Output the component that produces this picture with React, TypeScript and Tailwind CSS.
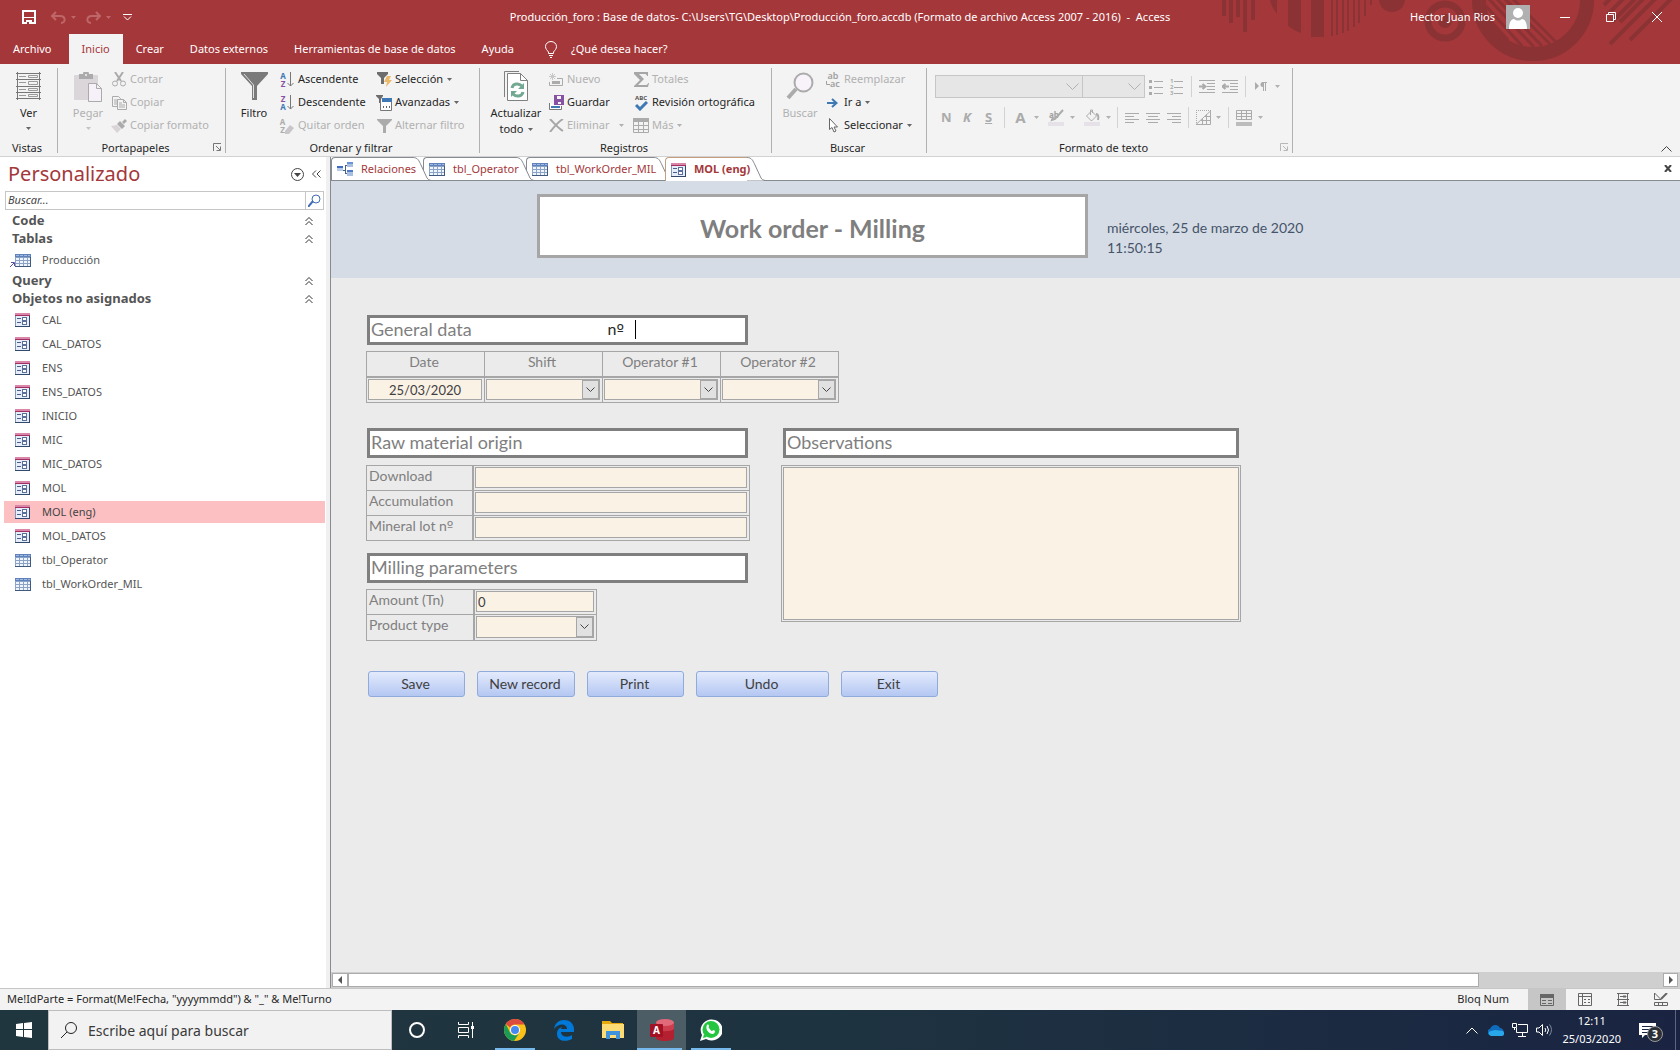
import React from 'react';

type IconProps = { className?: string };

/* ---------- small shared pieces ---------- */

const Caret = ({ className = 'text-[#666666]' }: IconProps) => (
  <svg width="5" height="3" viewBox="0 0 5 3" className={className} fill="currentColor">
    <path d="M0 0h5L2.500 3z" />
  </svg>
);

const TableIcon = () => (
  <svg width="16" height="13" viewBox="0 0 16 13" shapeRendering="crispEdges">
    <rect width="16" height="13" fill="#8ba3c7" />
    <rect width="16" height="3" fill="#5f82ba" />
    <path d="M1 4h3v2H1zM5 4h3v2H5zM9 4h3v2H9zM13 4h2v2h-2zM1 7h3v2H1zM5 7h3v2H5zM9 7h3v2H9zM13 7h2v2h-2zM1 10h3v2H1zM5 10h3v2H5zM9 10h3v2H9zM13 10h2v2h-2z" fill="#f0f5fc" />
    <path d="M15 3h1v10H0v-1h15z" fill="#40597f" />
    <path d="M1 1h3v1H1zM5 1h3v1H5zM9 1h3v1H9zM13 1h2v1h-2z" fill="#9db9e4" />
  </svg>
);

const FormIcon = () => (
  <svg width="15" height="14" viewBox="0 0 15 14" shapeRendering="crispEdges">
    <rect width="15" height="14" fill="#8296b8" />
    <rect x="1" y="3" width="13" height="10" fill="#e6eefb" />
    <rect width="15" height="2" fill="#d987a8" />
    <rect y="2" width="15" height="1" fill="#a52f60" />
    <path d="M14 3h1v11H0v-1h14z" fill="#33486c" />
    <path d="M2 5h4v1H2zM2 9h4v1H2z" fill="#4b5e86" />
    <path d="M7 4h5v4H7zM7 8h5v4H7z" fill="#5a6f99" />
    <path d="M8 5h3v2H8zM8 9h3v2H8z" fill="#fff" />
  </svg>
);

const RelationsIcon = () => (
  <svg width="16" height="14" viewBox="0 0 16 14" shapeRendering="crispEdges">
    <rect x="0" y="4" width="6" height="5" fill="#b9cdea" />
    <rect x="0" y="4" width="6" height="2" fill="#3f6bc0" />
    <rect x="10" y="0" width="6" height="5" fill="#a9bfe2" />
    <rect x="10" y="0" width="6" height="2" fill="#6b93d8" />
    <rect x="10" y="8" width="6" height="6" fill="#a9bfe2" />
    <rect x="10" y="8" width="6" height="2" fill="#4f7bcb" />
    <path d="M6 8h2V3h2M8 8v3h2" fill="none" stroke="#4a5f80" />
  </svg>
);

const DoubleUp = () => (
  <svg width="8" height="9" viewBox="0 0 8 9" fill="none" stroke="#333333">
    <path d="M.5 4L4 .5 7.500 4M.5 8L4 4.500 7.500 8" />
  </svg>
);

const Launcher = ({ className = 'text-[#777777]' }: IconProps) => (
  <svg width="9" height="9" viewBox="0 0 9 9" className={className} fill="none" stroke="currentColor">
    <path d="M.5 8V.5H8M3 3l4 4M7.500 3.500v4h-4" />
  </svg>
);

/* ---------- ribbon icons ---------- */

const ViewIcon = () => (
  <svg width="25" height="28" viewBox="0 0 25 28" fill="none" stroke="#777777">
    <path d="M1.500 0v28M23.500 0v28M0 1.500h25M0 7.500h25M0 14.500h25M0 20.500h25M0 26.500h25" />
    <path d="M3 4.500h7M3 10.500h7M3 17.500h7M3 23.500h7M12.500 3.500h9v2h-9zM12.500 9.500h9v3h-9zM12.500 16.500h9v2h-9zM12.500 22.500h9v2h-9z" stroke="#9a9a9a" />
  </svg>
);

const PasteIcon = () => (
  <svg width="28" height="30" viewBox="0 0 28 30">
    <rect x="0" y="3" width="24" height="25" rx="1" fill="#dad6da" />
    <path d="M5 2h4a3 3 0 0 1 6 0h4v5H5z" fill="#ababab" />
    <circle cx="12" cy="3" r="1" fill="#f3f3f3" />
    <path d="M14.500 11.500h8l5 5v13h-13z" fill="#f6f0f8" stroke="#ababab" />
    <path d="M22.500 11.500v5h5" fill="none" stroke="#ababab" />
  </svg>
);

const CutIcon = () => (
  <svg width="14" height="15" viewBox="0 0 14 15" fill="none" stroke="#ababab" strokeWidth="2">
    <path d="M3 0l6 9M11 0L5 9" />
    <circle cx="3" cy="11.500" r="2.500" strokeWidth="1" />
    <circle cx="11" cy="11.500" r="2.500" strokeWidth="1" />
  </svg>
);

const CopyIcon = () => (
  <svg width="15" height="14" viewBox="0 0 15 14" fill="#f3f3f3" stroke="#ababab">
    <path d="M.5.500h6l2 2v8h-8zM2 4h4M2 6h4M2 8h4" />
    <path d="M5.500 3.500h6l3 3v7h-9zM7 7h3M7 9h6M7 11h6M11.500 3.500v3h3" />
  </svg>
);

const BrushIcon = () => (
  <svg width="16" height="14" viewBox="0 0 16 14">
    <path d="M0 7l6-1 4 4-4 4z" fill="#d8d4d8" />
    <path d="M6 5l3-3 5 5-3 3zM11 3l3-3 2 2-3 3z" fill="#ababab" />
  </svg>
);

const Funnel = () => (
  <svg width="27" height="28" viewBox="0 0 27 28" fill="#7a7a7a">
    <path d="M0 0h27v2L16 14v14h-5V14L0 2z" />
    <path d="M3 2l9.500 11v13" fill="none" stroke="#e0e0e0" />
  </svg>
);

const SortIcon = ({ top, bottom, topClass, bottomClass }: { top: string; bottom: string; topClass: string; bottomClass: string }) => (
  <span className="flex items-center text-[8px] font-bold">
    <span className="flex flex-col leading-2">
      <span className={topClass}>{top}</span>
      <span className={bottomClass}>{bottom}</span>
    </span>
    <svg width="7" height="16" viewBox="0 0 7 16" className="ml-px" fill="none" stroke="#777777">
      <path d="M3.500 0v14M.5 11l3 3 3-3" />
    </svg>
  </span>
);

const ClearSortIcon = () => (
  <span className="flex items-end text-[8px] font-bold text-[#ababab]">
    <span className="flex flex-col leading-2">
      <span>A</span>
      <span>Z</span>
    </span>
    <svg width="9" height="9" viewBox="0 0 9 9" fill="#c9c5c9">
      <path d="M0 6l5-6 4 3-5 6H0z" />
    </svg>
  </span>
);

const SelectionIcon = () => (
  <svg width="15" height="15" viewBox="0 0 15 15">
    <path d="M0 0h11v2L7 6v6H4V6L0 2z" fill="#6d6d6d" />
    <path d="M10 4h4l-2 4h3l-6 7 1-5H7z" fill="#ecb968" />
  </svg>
);

const AdvancedIcon = () => (
  <svg width="16" height="16" viewBox="0 0 16 16">
    <path d="M0 0h7v1L5 4v4H3V4L0 1z" fill="#6d6d6d" />
    <path d="M4.500 5v10.500h11V5" fill="#fff" stroke="#777777" />
    <rect x="6" y="3" width="10" height="4" fill="#3e78b5" />
    <path d="M7 12h1M10 12h1M13 12h1" stroke="#666666" strokeWidth="2" />
  </svg>
);

const ToggleFilterIcon = () => (
  <svg width="15" height="14" viewBox="0 0 15 14" fill="#ababab">
    <path d="M0 0h15v1L9 7v7H6V7L0 1z" />
  </svg>
);

const RefreshIcon = () => (
  <svg width="24" height="30" viewBox="0 0 24 30" fill="none" stroke="#808080">
    <path d="M.5 26V.5H15" />
    <path d="M3.500 2.500h13l7 7v20h-20z" fill="#fff" />
    <path d="M16.500 2.500v7h7" />
    <path d="M8 17c1-5 7-5 10-2M19 21c-1 5-7 5-10 2" stroke="#73a992" strokeWidth="3" />
    <path d="M20 12v6h-6zM7 26v-6h6z" fill="#73a992" stroke="none" />
  </svg>
);

const NewIcon = () => (
  <svg width="14" height="13" viewBox="0 0 14 13" fill="none" stroke="#ababab">
    <path d="M3.500 0v7M0 3.500h7M1 1l5 5M6 1L1 6" stroke="#c8c8c8" />
    <path d="M8 5.500h5.500v7H.5V9" />
    <path d="M3 9.500h8" strokeWidth="3" />
  </svg>
);

const SaveRecordIcon = () => (
  <svg width="15" height="15" viewBox="0 0 15 15">
    <path d="M.5 8v6.500h12V11" fill="#fff" stroke="#777777" />
    <rect x="2" y="11" width="9" height="2" fill="#3e78b5" />
    <path d="M5 0h10v10H5z" fill="#8752a3" />
    <path d="M8 1h4v3H8zM9 7h3v2H9z" fill="#f3f3f3" />
  </svg>
);

const DeleteIcon = () => (
  <svg width="15" height="13" viewBox="0 0 15 13" stroke="#a6a6a6" strokeWidth="2" fill="none">
    <path d="M1 0c4 4 8 9 13 12M14 0C9 3 5 8 1 13" />
  </svg>
);

const SumIcon = () => (
  <svg width="15" height="15" viewBox="0 0 15 15" fill="#a6a6a6">
    <path d="M0 0h14v4h-1c0-1-1-2-2-2H5l5 5-6 6h8c1 0 2-1 2-2h1l-1 4H0v-1l6-6-6-6z" />
  </svg>
);

const SpellIcon = () => (
  <span className="flex flex-col items-center text-[6px] leading-[6px] font-bold text-[#555555]">
    ABC
    <svg width="13" height="10" viewBox="0 0 13 10" fill="none" stroke="#3e78b5" strokeWidth="3">
      <path d="M1 4l4 4 7-7" />
    </svg>
  </span>
);

const MoreIcon = () => (
  <svg width="16" height="15" viewBox="0 0 16 15" fill="none" stroke="#ababab">
    <rect x="0" y="0" width="16" height="4" fill="#ababab" stroke="none" />
    <path d="M.5.500h15v14H.5zM0 7.500h16M0 11.500h16M5.500 4v11M10.500 4v11" />
  </svg>
);

const FindIcon = () => (
  <svg width="28" height="28" viewBox="0 0 28 28" fill="none" stroke="#ababab">
    <path d="M2 26l8-9" strokeWidth="4" />
    <circle cx="17.500" cy="10.500" r="9" fill="#f8f2fa" strokeWidth="2" />
  </svg>
);

const ReplaceIcon = () => (
  <span className="flex flex-col text-[9px] leading-2 font-semibold text-[#a0a0a0]">
    <span>ab</span>
    <span className="flex items-center">
      <svg width="4" height="5" viewBox="0 0 4 5" fill="none" stroke="#a0a0a0">
        <path d="M.5 0v3.500H4" />
      </svg>
      ac
    </span>
  </span>
);

const GoToIcon = () => (
  <svg width="14" height="10" viewBox="0 0 14 10" fill="none" stroke="#3e78b5" strokeWidth="2">
    <path d="M1 5h10M6 1l4.500 4L6 9" />
  </svg>
);

const PointerIcon = () => (
  <svg width="9" height="15" viewBox="0 0 9 15" fill="#fff" stroke="#666666">
    <path d="M.5.500v11l2.500-2 2 4.500 2-1-2-4h3.500z" />
  </svg>
);

/* ---------- ribbon layout ---------- */

type Command = {
  label: string;
  icon: React.ReactNode;
  disabled?: boolean;
  caret?: boolean;
  farCaret?: boolean;
};

const CommandColumn = ({ items, className = '' }: { items: Command[]; className?: string }) => (
  <div className={`flex flex-col items-start ${className}`}>
    {items.map((item) => (
      <button
        key={item.label}
        type="button"
        disabled={item.disabled}
        className="flex h-[23px] items-center whitespace-nowrap text-[#262626] disabled:text-[#b1b1b1]"
      >
        <span className="mr-[3px] flex w-4 justify-center">{item.icon}</span>
        {item.label}
        {item.caret && (
          <span className={item.farCaret ? 'ml-[10px]' : 'ml-1'}>
            <Caret className={item.disabled ? 'text-[#b1b1b1]' : 'text-[#666666]'} />
          </span>
        )}
      </button>
    ))}
  </div>
);

const BigButton = ({ icon, label, disabled, caret, className }: Command & { className: string }) => (
  <button
    type="button"
    disabled={disabled}
    className={`flex shrink-0 flex-col items-center pt-1 text-[#262626] disabled:text-[#b1b1b1] ${className}`}
  >
    <span className="flex h-[33px] items-start justify-center">{icon}</span>
    <span className="leading-4 whitespace-nowrap">{label}</span>
    {caret && (
      <span className="mt-[6px]">
        <Caret className={disabled ? 'text-[#c4c4c4]' : 'text-[#666666]'} />
      </span>
    )}
  </button>
);

const Group = ({ title, className, launcher, children }: { title: string; className: string; launcher?: React.ReactNode; children: React.ReactNode }) => (
  <section className={`flex shrink-0 flex-col border-r border-[#b1b1b1] ${className}`}>
    <div className="flex h-[74px] items-start">{children}</div>
    <div className="flex h-[11px] items-center pr-[3px] text-[#262626]">
      <span className="grow text-center leading-[11px]">{title}</span>
      {launcher}
    </div>
  </section>
);

const sortColumn: Command[] = [
  { label: 'Ascendente', icon: <SortIcon top="A" bottom="Z" topClass="text-[#3e78b5]" bottomClass="text-[#8752a3]" /> },
  { label: 'Descendente', icon: <SortIcon top="Z" bottom="A" topClass="text-[#8752a3]" bottomClass="text-[#3e78b5]" /> },
  { label: 'Quitar orden', icon: <ClearSortIcon />, disabled: true },
];

const FormatButton = ({ label, children }: { label: string; children: React.ReactNode }) => (
  <button type="button" aria-label={label} disabled className="flex items-center gap-2 text-[#ababab]">
    {children}
  </button>
);

const Lines = ({ d }: { d: string }) => (
  <svg width="14" height="12" viewBox="0 0 14 12" fill="none" stroke="#ababab">
    <path d={d} />
  </svg>
);

const Divider = () => <span className="h-[21px] w-px bg-[#d2d2d2]" />;

const FontSelect = ({ label, className }: { label: string; className: string }) => (
  <div className={`relative h-[23px] ${className}`}>
    <select aria-label={label} disabled className="h-full w-full appearance-none border border-[#c6c6c6] bg-[#e6e6e6]" />
    <svg width="13" height="8" viewBox="0 0 13 8" className="absolute top-2 right-1" fill="none" stroke="#b1b1b1">
      <path d="M.5.500l6 6 6-6" />
    </svg>
  </div>
);

const Ribbon = () => (
  <div className="relative flex h-[93px] border-b border-[#d2d2d2] bg-[#f3f3f3] pt-1 pb-[3px]">
    <Group title="Vistas" className="w-[58px]">
      <BigButton icon={<ViewIcon />} label="Ver" caret className="w-full" />
    </Group>
    <Group title="Portapapeles" className="w-[168px]" launcher={<Launcher />}>
      <BigButton icon={<PasteIcon />} label="Pegar" caret disabled className="ml-3 w-9" />
      <CommandColumn
        className="ml-[5px]"
        items={[
          { label: 'Cortar', icon: <CutIcon />, disabled: true },
          { label: 'Copiar', icon: <CopyIcon />, disabled: true },
          { label: 'Copiar formato', icon: <BrushIcon />, disabled: true },
        ]}
      />
    </Group>
    <Group title="Ordenar y filtrar" className="w-[254px]">
      <BigButton icon={<Funnel />} label="Filtro" className="ml-3 w-8" />
      <CommandColumn className="ml-[9px] w-[97px]" items={sortColumn} />
      <CommandColumn
        items={[
          { label: 'Selección', icon: <SelectionIcon />, caret: true },
          { label: 'Avanzadas', icon: <AdvancedIcon />, caret: true },
          { label: 'Alternar filtro', icon: <ToggleFilterIcon />, disabled: true },
        ]}
      />
    </Group>
    <Group title="Registros" className="w-[292px]">
      <button type="button" className="ml-2 flex w-14 shrink-0 flex-col items-center pt-[3px] leading-4 text-[#262626]">
        <span className="flex h-[34px] items-start"><RefreshIcon /></span>
        <span>Actualizar</span>
        <span className="flex items-center gap-1">todo <Caret /></span>
      </button>
      <CommandColumn
        className="ml-1 w-[85px]"
        items={[
          { label: 'Nuevo', icon: <NewIcon />, disabled: true },
          { label: 'Guardar', icon: <SaveRecordIcon /> },
          { label: 'Eliminar', icon: <DeleteIcon />, disabled: true, caret: true, farCaret: true },
        ]}
      />
      <CommandColumn
        items={[
          { label: 'Totales', icon: <SumIcon />, disabled: true },
          { label: 'Revisión ortográfica', icon: <SpellIcon /> },
          { label: 'Más', icon: <MoreIcon />, disabled: true, caret: true },
        ]}
      />
    </Group>
    <Group title="Buscar" className="w-[155px]">
      <BigButton icon={<FindIcon />} label="Buscar" disabled className="ml-2 w-10" />
      <CommandColumn
        className="ml-[5px]"
        items={[
          { label: 'Reemplazar', icon: <ReplaceIcon />, disabled: true },
          { label: 'Ir a', icon: <GoToIcon />, caret: true },
          { label: 'Seleccionar', icon: <PointerIcon />, caret: true },
        ]}
      />
    </Group>
    <Group title="Formato de texto" className="w-[366px]" launcher={<Launcher className="text-[#b8b8b8]" />}>
      <div className="flex grow flex-col gap-2 pt-[7px] pl-2">
        <div className="flex h-[23px] items-center">
          <FontSelect label="Fuente" className="w-[148px]" />
          <FontSelect label="Tamaño de fuente" className="-ml-px w-[63px]" />
          <div className="ml-1 flex items-center gap-[7px]">
            <FormatButton label="Viñetas">
              <svg width="14" height="16" viewBox="0 0 14 16" fill="none" stroke="#ababab">
                <path d="M5 2.500h9M5 8.500h9M5 14.500h9" />
                <path d="M0 2.500h3M0 8.500h3M0 14.500h3" strokeWidth="3" />
              </svg>
            </FormatButton>
            <FormatButton label="Numeración">
              <span className="flex items-center gap-px">
                <span className="flex flex-col text-[6px] leading-[6px] font-bold">
                  <span>1</span>
                  <span>2</span>
                  <span>3</span>
                </span>
                <svg width="10" height="16" viewBox="0 0 10 16" stroke="currentColor">
                  <path d="M0 2.500h9M0 8.500h9M0 14.500h9" />
                </svg>
              </span>
            </FormatButton>
            <Divider />
            <FormatButton label="Aumentar sangría">
              <svg width="16" height="13" viewBox="0 0 16 13" fill="none" stroke="#ababab">
                <path d="M0 .5h16M8 3.500h8M8 6.500h8M8 9.500h8M0 12.500h16" />
                <path d="M0 6.500h6M3.500 4l3 2.500-3 2.500" strokeWidth="2" />
              </svg>
            </FormatButton>
            <FormatButton label="Disminuir sangría">
              <svg width="16" height="13" viewBox="0 0 16 13" fill="none" stroke="#ababab">
                <path d="M0 .5h16M8 3.500h8M8 6.500h8M8 9.500h8M0 12.500h16" />
                <path d="M7 6.500H1M3.500 4l-3 2.500 3 2.500" strokeWidth="2" />
              </svg>
            </FormatButton>
            <Divider />
            <FormatButton label="Dirección del texto">
              <svg width="12" height="9" viewBox="0 0 12 9" className="ml-[2px]" fill="#ababab">
                <path d="M0 0l4 4-4 4zM12 0H8a2 2 0 0 0 0 5v4h1V1h1v8h1V1h1z" />
              </svg>
              <Caret className="text-[#b1b1b1]" />
            </FormatButton>
          </div>
        </div>
        <div className="flex h-[23px] items-center pl-[6px] text-[13px] font-bold">
          <FormatButton label="Negrita"><span className="w-[22px] text-left">N</span></FormatButton>
          <FormatButton label="Cursiva"><span className="w-[22px] text-left italic">K</span></FormatButton>
          <FormatButton label="Subrayado"><span className="mr-3 underline">S</span></FormatButton>
          <Divider />
          <div className="ml-[10px] flex items-center gap-[9px]">
            <FormatButton label="Color de fuente">
              <span className="text-[15px]">A</span>
              <Caret className="text-[#b1b1b1]" />
            </FormatButton>
            <FormatButton label="Color de resaltado">
              <svg width="16" height="17" viewBox="0 0 16 17">
                <text x="1" y="9" fontSize="8" fontWeight="700" fontFamily="Noto Sans, sans-serif" fill="#a0a0a0">ab</text>
                <path d="M15 1l-8 9-3 1 1-3" fill="none" stroke="#ababab" strokeWidth="2" />
                <rect y="13" width="16" height="4" fill="#e6e1e8" />
              </svg>
              <Caret className="-ml-[2px] text-[#b1b1b1]" />
            </FormatButton>
            <FormatButton label="Color de fondo">
              <svg width="16" height="17" viewBox="0 0 16 17" fill="none" stroke="#ababab">
                <path d="M2.500 7l5-5 5 5-5 5zM6.500 6V1h2v3" />
                <path d="M12 5c2 0 3 2 2 6" strokeWidth="2" />
                <rect y="13" width="16" height="4" fill="#e6e1e8" stroke="none" />
              </svg>
              <Caret className="-ml-[2px] text-[#b1b1b1]" />
            </FormatButton>
          </div>
          <div className="ml-[6px] flex items-center gap-[7px]">
            <Divider />
            <FormatButton label="Alinear a la izquierda"><Lines d="M0 1.500h14M0 4.500h9M0 7.500h14M0 10.500h9" /></FormatButton>
            <FormatButton label="Centrar"><Lines d="M0 1.500h14M2 4.500h10M0 7.500h14M2 10.500h10" /></FormatButton>
            <FormatButton label="Alinear a la derecha"><Lines d="M0 1.500h14M5 4.500h9M0 7.500h14M5 10.500h9" /></FormatButton>
            <Divider />
            <FormatButton label="Líneas de división">
              <svg width="15" height="15" viewBox="0 0 15 15" fill="none" stroke="#ababab">
                <path d="M.5 15V0M0 .5h15" strokeDasharray="1 1" />
                <path d="M14.500 0v14.500H0L14.500 1M10.500 4v11M6.500 9v6M5 10.500h10M9 6.500h6" />
              </svg>
              <Caret className="-ml-[3px] text-[#b1b1b1]" />
            </FormatButton>
            <Divider />
            <FormatButton label="Color de fila alternativo">
              <svg width="16" height="16" viewBox="0 0 16 16" fill="none" stroke="#ababab">
                <path d="M.5.500h15v9H.5zM0 3.500h16M0 6.500h16M5.500 0v9M10.500 0v9" />
                <rect y="12" width="16" height="4" fill="#bcbcbc" stroke="none" />
              </svg>
              <Caret className="-ml-[2px] text-[#b1b1b1]" />
            </FormatButton>
          </div>
        </div>
      </div>
    </Group>
    <button type="button" aria-label="Contraer la cinta de opciones" className="mt-auto mr-2 mb-px ml-auto">
      <svg width="11" height="6" viewBox="0 0 11 6" fill="none" stroke="#444444">
        <path d="M.5 5.500l5-5 5 5" />
      </svg>
    </button>
  </div>
);

/* ---------- title bar ---------- */

const TitleArt = () => (
  <svg width="480" height="64" viewBox="0 0 480 64" className="absolute top-0 right-0" fill="#8b3235">
    <path d="M22 0h4v16h-4zM29 0h4v23h-4zM36 0h4v17h-4zM43 0h4v32h-4zM51 0h4v20h-4z" />
    <path d="M70 0h7v14c-3-4-6-9-7-14zM88 0h13v33c-5-2-9-4-13-7zM111 0h13v37h-13z" />
    <path d="M131 0h2v36h-2zM136 0h2v35h-2zM142 0h2v33h-2zM147 0h2v31h-2zM153 0h2v27h-2zM158 0h2v23h-2zM164 0h2v16h-2zM170 0h2v5h-2z" />
    <circle cx="192" cy="-1" r="13" />
    <circle cx="245" cy="21" r="17" fill="none" stroke="#8b3235" strokeWidth="7" />
    <circle cx="245" cy="21" r="7" />
    <circle cx="333" cy="0" r="54" fill="none" stroke="#8b3235" strokeWidth="14" />
    <path d="M286 6l36 40M288 -2l46 49M296 -2l46 48M304 -2l46 46M312 -2l44 44M288 18l20 22" stroke="#8b3235" strokeWidth="3" />
    <path d="M404 5l6-6M408 14l16-16M412 22l24-24M420 22l24-24M410 44l46-46M430 40l44-44" stroke="#8b3235" strokeWidth="4" />
  </svg>
);

const ribbonTabs = ['Crear', 'Datos externos', 'Herramientas de base de datos', 'Ayuda'];

const TitleBar = () => (
  <header className="relative bg-[#a4373a] text-white">
    <TitleArt />
    <div className="relative grid h-[34px] grid-cols-[1fr_auto_1fr] items-center">
      <div className="flex items-center pl-[22px]">
        <button type="button" aria-label="Guardar">
          <svg width="14" height="14" viewBox="0 0 14 14" fill="none" stroke="#fff">
            <path d="M1 1h12v12H1z" strokeWidth="2" />
            <path d="M1 7.500h12" />
            <path d="M4 10h6v4H4z" fill="#fff" stroke="none" />
            <path d="M5 12h2v2H5z" fill="#a4373a" stroke="none" />
          </svg>
        </button>
        <button type="button" aria-label="Deshacer" disabled className="ml-[15px] flex items-center gap-[5px] text-[#bf6668]">
          <svg width="15" height="13" viewBox="0 0 15 13" fill="none" stroke="currentColor" strokeWidth="2">
            <path d="M5 1L1 5l4 4M1 5h8c6 0 6 7 1 7" />
          </svg>
          <Caret className="text-[#bf6668]" />
        </button>
        <button type="button" aria-label="Rehacer" disabled className="ml-[10px] flex items-center gap-[5px] text-[#bf6668]">
          <svg width="15" height="13" viewBox="0 0 15 13" fill="none" stroke="currentColor" strokeWidth="2">
            <path d="M10 1l4 4-4 4M14 5H6c-6 0-6 7-1 7" />
          </svg>
          <Caret className="text-[#bf6668]" />
        </button>
        <button type="button" aria-label="Personalizar barra de acceso rápido" className="ml-3">
          <svg width="9" height="7" viewBox="0 0 9 7" fill="none" stroke="#fff">
            <path d="M0 .5h9M1 2.500l3.500 3.500L8 2.500" />
          </svg>
        </button>
      </div>
      <h1 className="whitespace-pre">
        {'Producción_foro : Base de datos- C:\\Users\\TG\\Desktop\\Producción_foro.accdb (Formato de archivo Access 2007 - 2016)  -  Access'}
      </h1>
      <div className="flex items-center justify-end pr-[18px]">
        <span>Hector Juan Rios</span>
        <svg width="24" height="24" viewBox="0 0 24 24" className="ml-[11px]">
          <rect width="24" height="24" fill="#b0b0b0" />
          <circle cx="12" cy="8" r="5" fill="#fff" />
          <path d="M3 24c0-8 3-10 5-10 3 2 5 2 8 0 2 0 5 2 5 10z" fill="#fff" />
        </svg>
        <button type="button" aria-label="Minimizar" className="ml-[30px]">
          <svg width="10" height="10" viewBox="0 0 10 10" stroke="#fff"><path d="M0 5.500h10" /></svg>
        </button>
        <button type="button" aria-label="Restaurar" className="ml-9">
          <svg width="10" height="10" viewBox="0 0 10 10" fill="none" stroke="#fff">
            <path d="M.5 2.500h7v7h-7zM2.500 2V.5h7v7H8" />
          </svg>
        </button>
        <button type="button" aria-label="Cerrar" className="ml-9">
          <svg width="10" height="10" viewBox="0 0 10 10" stroke="#fff"><path d="M0 0l10 10M10 0L0 10" /></svg>
        </button>
      </div>
    </div>
    <nav className="relative flex h-[30px]">
      <a href="#" className="flex items-center pr-[17px] pl-[13px]">Archivo</a>
      <a href="#" className="flex items-center bg-[#f3f3f3] px-[13px] text-[#a4373a]">Inicio</a>
      {ribbonTabs.map((tab) => (
        <a key={tab} href="#" className="flex items-center px-[13px]">{tab}</a>
      ))}
      <button type="button" className="ml-[18px] flex items-center gap-[14px]">
        <svg width="12" height="17" viewBox="0 0 12 17" fill="none" stroke="#fff">
          <path d="M3.500 12.500V11C2 9 .5 8 .5 5.500a5.500 5 0 0 1 11 0C11.500 8 10 9 8.500 11v1.500zM4 14.500h4M5 16.500h2" />
        </svg>
        ¿Qué desea hacer?
      </button>
    </nav>
  </header>
);

/* ---------- navigation pane ---------- */

const unassigned = [
  'CAL', 'CAL_DATOS', 'ENS', 'ENS_DATOS', 'INICIO', 'MIC', 'MIC_DATOS',
  'MOL', 'MOL (eng)', 'MOL_DATOS', 'tbl_Operator', 'tbl_WorkOrder_MIL',
];

const NavGroup = ({ title }: { title: string }) => (
  <button type="button" className="flex h-[18px] w-full items-center justify-between pr-3 pl-2 text-[13px] font-bold text-[#555555]">
    {title}
    <DoubleUp />
  </button>
);

const NavPane = () => (
  <aside className="flex w-[326px] shrink-0 flex-col bg-white">
    <div className="flex h-[34px] items-center pr-[5px] pl-2">
      <h2 className="grow text-[20px] text-[#a4373a]">Personalizado</h2>
      <button type="button" aria-label="Categorías">
        <svg width="13" height="13" viewBox="0 0 13 13" fill="none" stroke="#444444">
          <circle cx="6.500" cy="6.500" r="6" />
          <path d="M3 5h7L6.500 9z" fill="#444444" stroke="none" />
        </svg>
      </button>
      <button type="button" aria-label="Contraer panel" className="ml-2">
        <svg width="9" height="8" viewBox="0 0 9 8" fill="none" stroke="#444444">
          <path d="M4 .5L.5 4 4 7.500M8.500.5L5 4l3.500 3.500" />
        </svg>
      </button>
    </div>
    <div className="mr-[2px] ml-[5px] flex h-[19px] border border-[#c6c6c6]">
      <input
        type="text"
        aria-label="Buscar objetos"
        placeholder="Buscar..."
        className="min-w-0 grow pl-[2px] text-[11px] italic outline-none placeholder:text-[#444444]"
      />
      <button type="button" aria-label="Buscar" className="flex w-[18px] items-center justify-center border-l border-[#c6c6c6]">
        <svg width="13" height="13" viewBox="0 0 13 13" fill="none" stroke="#3e6db5" strokeWidth="2">
          <path d="M0 13l5-6" />
          <circle cx="8" cy="5" r="4" strokeWidth="1" />
        </svg>
      </button>
    </div>
    <div className="px-1 pt-[2px] pr-px text-[#555555]">
      <NavGroup title="Code" />
      <NavGroup title="Tablas" />
      <a href="#" className="flex h-6 items-center">
        <span className="flex w-[38px] items-end pl-[6px]">
          <svg width="5" height="5" viewBox="0 0 5 5" fill="none" stroke="#5c4fa0">
            <path d="M0 5l4-4M1 .5h3.500V4" />
          </svg>
          <TableIcon />
        </span>
        Producción
      </a>
      <NavGroup title="Query" />
      <NavGroup title="Objetos no asignados" />
      <ul>
        {unassigned.map((name) => (
          <li key={name} className="h-6 py-px">
            <a
              href="#"
              className={
                name === 'MOL (eng)'
                  ? 'flex h-full items-center bg-[#fcc0c2] text-[#444444]'
                  : 'flex h-full items-center'
              }
            >
              <span className="w-[38px] pl-[11px]">
                {name.startsWith('tbl') ? <TableIcon /> : <FormIcon />}
              </span>
              {name}
            </a>
          </li>
        ))}
      </ul>
    </div>
  </aside>
);

/* ---------- document tabs ---------- */

const documents = [
  { name: 'Relaciones', icon: <RelationsIcon />, size: 'z-30 w-[100px]' },
  { name: 'tbl_Operator', icon: <TableIcon />, size: 'z-20 -ml-2 w-[111px]' },
  { name: 'tbl_WorkOrder_MIL', icon: <TableIcon />, size: 'z-10 -ml-2 w-[146px]' },
  { name: 'MOL (eng)', icon: <FormIcon />, size: 'z-40 -ml-[7px] w-[100px]', active: true },
];

const DocumentTabs = () => (
  <div className="relative flex h-6 border-b border-[#868a91] bg-white">
    {documents.map((doc) => (
      <a
        key={doc.name}
        href="#"
        className={`relative flex h-6 shrink-0 text-[#a4373a] ${doc.size} ${doc.active ? 'font-bold' : ''}`}
      >
        <span
          className={
            doc.active
              ? 'flex min-w-0 grow items-center gap-2 rounded-tl-[4px] border-t border-l border-[#c39f80] bg-white pl-[5px] whitespace-nowrap'
              : 'flex min-w-0 grow items-center gap-2 rounded-tl-[4px] border-t border-b border-l border-[#868a91] bg-white pl-[5px] whitespace-nowrap'
          }
        >
          <span className="shrink-0">{doc.icon}</span>
          <span className="relative z-10">{doc.name}</span>
        </span>
        <svg width="18" height="24" viewBox="0 0 18 24" className="shrink-0" fill="none" stroke="#868a91">
          <path d="M0 .5C5 .5 6 4 8 8l6 13q1 2 4 2.500H0z" fill="#fff" stroke="none" />
          <path d="M0 .5C5 .5 6 4 8 8l6 13q1 2 4 2.500" />
          {!doc.active && <path d="M0 23.500h18" />}
        </svg>
      </a>
    ))}
    <button type="button" aria-label="Cerrar pestaña" className="mr-2 ml-auto">
      <svg width="8" height="7" viewBox="0 0 8 7" stroke="#444444" strokeWidth="2">
        <path d="M1 0l6 7M7 0L1 7" />
      </svg>
    </button>
  </div>
);

/* ---------- work order form ---------- */

const fieldClass = 'block w-full border border-[#a6a6a6] bg-[#fbf2e6] text-[#404040] outline-none';

const ComboBox = ({ id, className = 'h-[21px]' }: { id: string; className?: string }) => (
  <div className={`relative ${className}`}>
    <select id={id} className={`${fieldClass} h-full appearance-none`} />
    <span className="pointer-events-none absolute inset-y-0 right-0 flex w-[18px] items-center justify-center border-2 border-l border-[#a6a6a6] bg-[#e1e1e1]">
      <svg width="9" height="6" viewBox="0 0 9 6" fill="none" stroke="#444444">
        <path d="M.5.500l4 4 4-4" />
      </svg>
    </span>
  </div>
);

const SectionTitle = ({ children, className = '' }: { children: React.ReactNode; className?: string }) => (
  <div className={`flex h-[30px] items-center border-[3px] border-[#7f7f7f] bg-white pb-px pl-px text-[18px] text-[#7f7f7f] ${className}`}>
    {children}
  </div>
);

/* Lato draws the ordinal without its bar */
const Ordinal = () => <span className="font-['DejaVu_Sans',sans-serif]">º</span>;

const generalFields = [
  { id: 'shift', label: 'Shift' },
  { id: 'operator1', label: 'Operator #1' },
  { id: 'operator2', label: 'Operator #2' },
];

const originFields = [
  { id: 'download', label: 'Download' },
  { id: 'accumulation', label: 'Accumulation' },
  { id: 'lot', label: <>Mineral lot n<Ordinal /></> },
];

const headClass = 'h-[25px] border-r border-b border-[#a6a6a6] pr-[3px] leading-5';
const cellClass = 'border-[#a6a6a6] pt-px pr-[2px] pl-px';
const labelClass = 'shrink-0 border-r border-[#a6a6a6] pl-[2px] leading-5';

const actions = [
  { label: 'Save', width: 'w-[97px]' },
  { label: 'New record', width: 'w-[98px]' },
  { label: 'Print', width: 'w-[97px]' },
  { label: 'Undo', width: 'w-[133px]' },
  { label: 'Exit', width: 'w-[97px]' },
];

const WorkOrder = () => (
  <main className="flex grow flex-col bg-[#ebebeb] font-['Lato','Noto_Sans',sans-serif] text-[14px] text-[#7f7f7f]">
    <div className="flex h-[97px] items-start bg-[#d6dce5] pt-[13px] pl-[206px]">
      <h2 className="flex h-16 w-[551px] items-center justify-center border-[3px] border-[#a6a6a6] bg-white pt-[6px] text-[25px] font-bold">
        Work order - Milling
      </h2>
      <div className="pt-6 pl-[19px] leading-5 text-[#44546a]">
        <p>miércoles, 25 de marzo de 2020</p>
        <p>11:50:15</p>
      </div>
    </div>

    <form className="grow pt-[37px] pl-[35px]" onSubmit={(e) => e.preventDefault()}>
      <SectionTitle className="ml-px w-[381px]">
        General data
        <label htmlFor="number" className="ml-auto text-[16px] text-[#262626]">n<Ordinal /></label>
        <span className="ml-[11px] h-[19px] w-px bg-black" />
        <input id="number" type="text" className="w-[109px] outline-none" />
      </SectionTitle>

      <div className="mt-[6px] grid w-[473px] grid-cols-4 border-t border-l border-[#a6a6a6] text-center">
        <div className="flex flex-col">
          <label htmlFor="date" className={headClass}>Date</label>
          <div className={`h-[26px] border-t border-r border-b ${cellClass}`}>
            <input id="date" type="text" defaultValue="25/03/2020" className={`${fieldClass} h-[21px] text-center text-[13px]`} />
          </div>
        </div>
        {generalFields.map((field) => (
          <div key={field.id} className="flex flex-col">
            <label htmlFor={field.id} className={headClass}>{field.label}</label>
            <div className={`h-[26px] border-t border-r border-b ${cellClass}`}>
              <ComboBox id={field.id} />
            </div>
          </div>
        ))}
      </div>

      <div className="mt-[25px] flex items-start gap-[31px]">
        <div>
          <SectionTitle className="ml-px w-[381px]">Raw material origin</SectionTitle>
          <div className="mt-[7px] w-[384px] border-t border-l border-[#a6a6a6]">
            {originFields.map((field) => (
              <div key={field.id} className="flex h-[25px] border-r border-b border-[#a6a6a6]">
                <label htmlFor={field.id} className={`${labelClass} w-[106px]`}>{field.label}</label>
                <div className={`grow border-l ${cellClass}`}>
                  <input id={field.id} type="text" className={`${fieldClass} h-[21px]`} />
                </div>
              </div>
            ))}
          </div>

          <SectionTitle className="mt-3 ml-px w-[381px]">Milling parameters</SectionTitle>
          <div className="mt-[6px] w-[231px] border-t border-l border-[#a6a6a6]">
            <div className="flex h-[25px] border-r border-b border-[#a6a6a6]">
              <label htmlFor="amount" className={`${labelClass} w-[107px]`}>Amount (Tn)</label>
              <div className={`grow border-l ${cellClass}`}>
                <input id="amount" type="text" defaultValue="0" className={`${fieldClass} h-[21px] pl-px text-[13px]`} />
              </div>
            </div>
            <div className="flex h-[26px] border-r border-b border-[#a6a6a6]">
              <label htmlFor="product" className={`${labelClass} w-[107px]`}>Product type</label>
              <div className={`grow border-l ${cellClass}`}>
                <ComboBox id="product" className="h-[22px]" />
              </div>
            </div>
          </div>
        </div>

        <div className="w-[460px]">
          <SectionTitle className="mx-[2px]"><label htmlFor="observations">Observations</label></SectionTitle>
          <div className="mt-[7px] h-[157px] border border-[#a6a6a6] p-px">
            <textarea id="observations" className={`${fieldClass} h-[153px] resize-none`} />
          </div>
        </div>
      </div>

      <div className="mt-[30px] ml-[2px] flex gap-3">
        {actions.map((action) => (
          <button
            key={action.label}
            type="button"
            className={`h-[26px] rounded-[3px] border border-[#8faadc] bg-linear-to-b from-[#e3eafc] to-[#b4c7f2] pr-[2px] pb-[2px] text-[#404040] ${action.width}`}
          >
            {action.label}
          </button>
        ))}
      </div>
    </form>

    <div className="flex h-4 border-y border-[#cfcfcf] bg-[#cfcfcf] pl-px">
      <button type="button" aria-label="Desplazar a la izquierda" className="flex w-4 items-center justify-center border border-[#ababab] bg-white">
        <svg width="4" height="8" viewBox="0 0 4 8" fill="#555555"><path d="M4 0v8L0 4z" /></svg>
      </button>
      <div className="grow pr-[184px]"><div className="h-full border border-[#ababab] bg-white" /></div>
      <button type="button" aria-label="Desplazar a la derecha" className="mr-[2px] flex w-[15px] items-center justify-center border border-[#ababab] bg-white">
        <svg width="4" height="8" viewBox="0 0 4 8" fill="#555555"><path d="M0 0v8l4-4z" /></svg>
      </button>
    </div>
  </main>
);

/* ---------- status bar ---------- */

const StatusBar = () => (
  <div className="flex h-[22px] items-center border-t border-[#c6c6c6] bg-[#f3f3f3] pl-[7px] text-[#262626]">
    <span className="grow">Me!IdParte = Format(Me!Fecha, "yyyymmdd") &amp; "_" &amp; Me!Turno</span>
    <span className="mr-[19px]">Bloq Num</span>
    <button type="button" aria-label="Vista Formulario" className="flex h-full w-[38px] items-center justify-center bg-[#c6c6c6]">
      <svg width="14" height="12" viewBox="0 0 14 12" fill="none" stroke="#666666">
        <path d="M.5.500h13v11H.5zM2 6.500h4M2 9.500h4" />
        <path d="M0 0h14v4H0zM8 6h4v1H8zM8 9h4v1H8z" fill="#666666" stroke="none" />
      </svg>
    </button>
    <button type="button" aria-label="Vista Hoja de datos" className="flex w-[38px] justify-center">
      <svg width="14" height="13" viewBox="0 0 14 13" fill="none" stroke="#666666">
        <path d="M.5.500h13v12H.5zM0 3.500h14M4.500 0v13M6 6.500h2M6 9.500h2M10 6.500h2M10 9.500h2" />
      </svg>
    </button>
    <button type="button" aria-label="Vista Presentación" className="flex w-[38px] justify-center">
      <svg width="12" height="13" viewBox="0 0 12 13" fill="none" stroke="#666666">
        <path d="M1.500 0v13M10.500 0v13M0 .5h12M0 6.500h12M0 12.500h12M3 3.500h3M3 9.500h3" />
        <path d="M6 3h3v1H6zM6 9h3v1H6z" fill="#666666" />
      </svg>
    </button>
    <button type="button" aria-label="Vista Diseño" className="flex w-[38px] justify-center">
      <svg width="14" height="13" viewBox="0 0 14 13" fill="none" stroke="#666666">
        <path d="M.5 0v6.500H7zM.5 9.500h13v3H.5zM4.500 10v2M8.500 10v2" />
        <path d="M13 0L7 6" strokeWidth="2" />
      </svg>
    </button>
  </div>
);

/* ---------- taskbar ---------- */

const taskClass = 'flex h-full w-[49px] items-center justify-center';

const Taskbar = () => (
  <footer className="flex h-10 items-center bg-linear-to-r from-[#20363e] via-[#1e3340] to-[#1a2442] text-white">
    <button type="button" aria-label="Inicio" className="flex h-full w-12 items-center justify-center">
      <svg width="16" height="16" viewBox="0 0 16 16" fill="#fff">
        <path d="M0 2l7-1v6H0zM8 1l8-1v7H8zM0 8h7v7l-7-1zM8 8h8v8l-8-1z" />
      </svg>
    </button>
    <div className="flex h-full w-[344px] items-center border border-[#bdbdbd] bg-[#f2f2f2] pl-3 text-[#333333]">
      <svg width="16" height="16" viewBox="0 0 16 16" fill="none" stroke="#222222">
        <circle cx="10" cy="6" r="5.500" />
        <path d="M6 10l-6 6" />
      </svg>
      <input
        type="text"
        aria-label="Escribe aquí para buscar"
        placeholder="Escribe aquí para buscar"
        className="ml-[11px] min-w-0 grow bg-transparent text-[14px] outline-none placeholder:text-[#3a3a3a]"
      />
    </div>
    <button type="button" aria-label="Cortana" className={taskClass}>
      <svg width="16" height="16" viewBox="0 0 16 16" fill="none" stroke="#fff" strokeWidth="2"><circle cx="8" cy="8" r="7" /></svg>
    </button>
    <button type="button" aria-label="Vista de tareas" className={taskClass}>
      <svg width="16" height="16" viewBox="0 0 16 16" fill="none" stroke="#fff">
        <path d="M.5 0v2.500h10V0M.5 16v-2.500h10V16M.5 5.500h10v5H.5zM14.500 0v16" />
        <path d="M13 4h3v3h-3z" fill="#fff" stroke="none" />
      </svg>
    </button>
    <button type="button" aria-label="Google Chrome" className={`${taskClass} relative`}>
      <svg width="22" height="22" viewBox="0 0 22 22">
        <circle cx="11" cy="11" r="11" fill="#fbc116" />
        <path d="M11 0a11 11 0 0 1 9.600 5.500H11a5.500 5.500 0 0 0-5 3L1.800 5A11 11 0 0 1 11 0z" fill="#dd4b3e" />
        <path d="M1.800 5A11 11 0 0 0 10 22l5-7.500a5.500 5.500 0 0 1-9-1z" fill="#1a9c57" />
        <circle cx="11" cy="11" r="5" fill="#fff" />
        <circle cx="11" cy="11" r="4" fill="#4688f1" />
      </svg>
      <span className="absolute bottom-0 h-[2px] w-10 bg-[#76b9ed]" />
    </button>
    <button type="button" aria-label="Microsoft Edge" className={taskClass}>
      <svg width="20" height="21" viewBox="0 0 20 21" fill="#0078d7">
        <path d="M0 9C1 3 5 0 10 0c7 0 10 5 10 9v3H7c0 5 7 6 11 3v4c-5 3-15 3-15-5 0-4 2-6 5-7-1 1-1 2-1 2h6c0-6-9-6-13 0z" />
      </svg>
    </button>
    <button type="button" aria-label="Explorador de archivos" className={taskClass}>
      <svg width="22" height="18" viewBox="0 0 22 18">
        <path d="M0 0h8l2 2h11v15H0z" fill="#e8a90c" />
        <path d="M0 3h22v14H0z" fill="#fddc76" />
        <path d="M4 18v-8h14v8h-4v-4H8v4z" fill="#3f93dc" />
      </svg>
    </button>
    <button type="button" aria-label="Access" className={`${taskClass} relative bg-[#4d5d66]`}>
      <svg width="24" height="22" viewBox="0 0 24 22">
        <path d="M6 3v16c0 4 18 4 18 0V3z" fill="#b3202f" />
        <path d="M6 10c3 3 15 3 18 0V3H6z" fill="#cc3e4e" />
        <ellipse cx="15" cy="3.500" rx="9" ry="3.500" fill="#e0697a" />
        <rect y="5" width="13" height="13" rx="1" fill="#a31224" />
        <text x="3" y="15" fontSize="10" fontWeight="700" fontFamily="Noto Sans, sans-serif" fill="#fff">A</text>
      </svg>
      <span className="absolute bottom-0 left-0 h-[2px] w-[45px] bg-[#76b9ed]" />
    </button>
    <button type="button" aria-label="WhatsApp" className={`${taskClass} relative`}>
      <svg width="22" height="22" viewBox="0 0 22 22">
        <path d="M0 22l2-6A11 10.500 0 1 1 6 20z" fill="#fff" />
        <circle cx="11" cy="10.500" r="8.500" fill="#25c63f" />
        <path d="M3 19l1-4 3 3z" fill="#25c63f" />
        <path d="M7 6c1-1 2 0 2 1s-1 1 0 2 2 3 3 3 1-2 3 0c0 3-3 4-6 1.500S6 8 7 6z" fill="#fff" />
      </svg>
      <span className="absolute bottom-0 h-[2px] w-10 bg-[#76b9ed]" />
    </button>

    <div className="ml-auto flex h-full items-center">
      <svg width="12" height="7" viewBox="0 0 12 7" fill="none" stroke="#fff"><path d="M.5 6.500l5.500-5.500 5.500 5.500" /></svg>
      <svg width="16" height="11" viewBox="0 0 16 11" className="ml-[10px]">
        <path d="M3 10A3 3 0 0 1 2 4c2-5 8-5 10-1 4 0 5 6 1 7z" fill="#0f6cbd" />
        <path d="M3 11c-3-1-3-5 0-5l4-1 8 1c2 2 1 5-1 5z" fill="#28a8ea" />
      </svg>
      <svg width="16" height="14" viewBox="0 0 16 14" className="ml-2" fill="none" stroke="#fff">
        <path d="M6 1.500h9.500v8H4.500V5M10.500 10v3M6 13.500h8M.5.500h4v4h-4zM2.500 4v3" />
      </svg>
      <svg width="16" height="12" viewBox="0 0 16 12" className="ml-2" fill="none" stroke="#fff">
        <path d="M.5 4H3l3.500-3.500v11L3 8H.5zM9 4q1.500 2 0 4M11 2q3 4 0 8" />
        <path d="M13.500.5q4 5 0 11" stroke="#7c879a" />
      </svg>
      <div className="ml-[10px] text-center leading-[18px]">
        <p>12:11</p>
        <p>25/03/2020</p>
      </div>
      <button type="button" aria-label="Notificaciones" className="relative ml-[18px] h-6 w-7">
        <svg width="17" height="15" viewBox="0 0 17 15">
          <path d="M0 0h17v12H6l-3 3v-3H0z" fill="#fff" />
          <path d="M3 3.500h11M3 6.500h11M3 9.500h6" stroke="#1a2744" />
        </svg>
        <span className="absolute right-1 bottom-0 flex size-4 items-center justify-center rounded-full border border-[#9a9a9a] bg-[#2b2f36] font-bold">3</span>
      </button>
      <span className="mr-1 ml-2 h-full w-px bg-[#5c6680]" />
    </div>
  </footer>
);

const App = () => {
  return (
    <div className="flex min-h-screen flex-col bg-white font-['Noto_Sans',sans-serif] text-[11px]">
      <TitleBar />
      <Ribbon />
      <div className="flex grow">
        <NavPane />
        <div className="w-[4px] shrink-0 bg-[#f0f0f0]" />
        <div className="flex min-w-0 grow flex-col border-l border-[#868a91]">
          <DocumentTabs />
          <WorkOrder />
        </div>
      </div>
      <StatusBar />
      <Taskbar />
    </div>
  );
};

export default App;
